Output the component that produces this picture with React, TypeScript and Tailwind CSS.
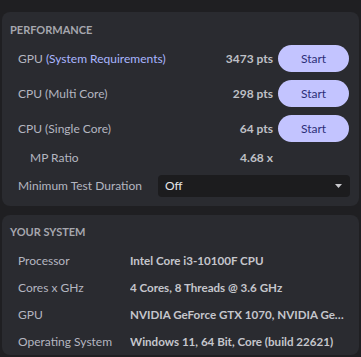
import React from "react";

const font = { fontFamily: 'Lato, "Noto Sans", sans-serif' };

const BenchRow = ({ label, link, pts }: { label: string; link?: string; pts: string }) => (
  <div className="flex h-[35px] items-center">
    <div className="flex-1 whitespace-nowrap pl-[8px] text-[12px] text-[#b4b6c0]">
      {label}
      {link && <span className="text-[#a9b6ff]"> {link}</span>}
    </div>
    <div className="w-[100px] whitespace-nowrap pr-[5px] text-right text-[12px] font-bold text-[#bfc0c6]">{pts}</div>
    <button className="mr-[2px] h-[27px] w-[71px] shrink-0 rounded-full bg-[#c3c4ff] text-[12px] text-[#2c2e78]">
      Start
    </button>
  </div>
);

const SysRow = ({ label, value }: { label: string; value: string }) => (
  <div className="flex h-[27px] items-center text-[12px]">
    <div className="w-[120px] shrink-0 pl-[8px] text-[#b4b6c0]">{label}</div>
    <div className="min-w-0 truncate pr-[2px] text-[11.6px] font-bold text-[#c5c6cc]">{value}</div>
  </div>
);

export default function App() {
  return (
    <div className="h-[357px] w-[361px] overflow-hidden bg-[#1f1f22] pt-[12px]" style={font}>
      <div className="mx-[2px] rounded-[8px] bg-[#2a2b30] px-[8px] pb-[3px] pt-[10px]">
        <div className="h-[16px] text-[11px] font-bold leading-[16px] text-[#a6a7ae]">PERFORMANCE</div>
        <div className="mt-[3px]">
          <BenchRow label="GPU" link="(System Requirements)" pts="3473 pts" />
          <BenchRow label="CPU (Multi Core)" pts="298 pts" />
          <BenchRow label="CPU (Single Core)" pts="64 pts" />
          <div className="flex h-[23px] items-center">
            <div className="flex-1 pl-[20px] text-[12px] text-[#b4b6c0]">MP Ratio</div>
            <div className="w-[100px] whitespace-nowrap pr-[5px] text-right text-[12px] font-bold text-[#bfc0c6]">4.68 x</div>
            <div className="w-[73px] shrink-0" />
          </div>
          <div className="flex h-[34px] items-center">
            <div className="w-[148px] shrink-0 whitespace-nowrap pl-[8px] text-[12px] text-[#b4b6c0]">Minimum Test Duration</div>
            <div className="mr-[1px] flex h-[22px] flex-1 items-center justify-between rounded-[4px] bg-[#1c1c1e] pl-[7px] pr-[8px]">
              <span className="text-[12px] text-[#e6e6e8]">Off</span>
              <svg width="7" height="4" viewBox="0 0 7 4">
                <path d="M0 0 L7 0 L3.5 4 Z" fill="#c8c8cc" />
              </svg>
            </div>
          </div>
        </div>
      </div>
      <div className="mx-[2px] mt-[9px] h-[140px] rounded-[8px] bg-[#2a2b30] px-[8px] pt-[9px]">
        <div className="h-[16px] text-[11px] font-bold leading-[16px] text-[#a6a7ae]">YOUR SYSTEM</div>
        <div className="mt-[7px]">
          <SysRow label="Processor" value="Intel Core i3-10100F CPU" />
          <SysRow label="Cores x GHz" value="4 Cores, 8 Threads @ 3.6 GHz" />
          <SysRow label="GPU" value="NVIDIA GeForce GTX 1070, NVIDIA GeForce GTX 1070" />
          <SysRow label="Operating System" value="Windows 11, 64 Bit, Core (build 22621)" />
        </div>
      </div>
    </div>
  );
}
